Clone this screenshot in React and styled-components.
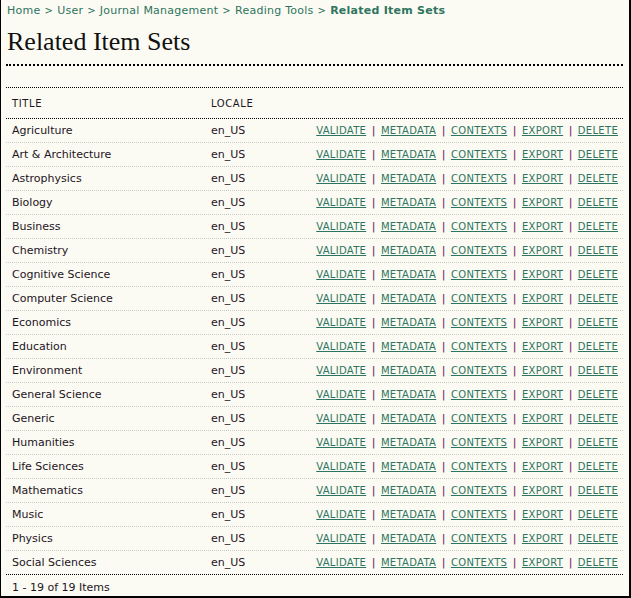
import React from "react";
import styled, { createGlobalStyle } from "styled-components";

const Global = createGlobalStyle`
  html, body { margin: 0; padding: 0; background: #fbfbf3; }
  body { font-family: "DejaVu Sans", Verdana, sans-serif; }
`;

const Frame = styled.div`
  box-sizing: border-box;
  width: 631px;
  height: 598px;
  background: #fbfbf3;
  border-left: 1px solid #000;
  border-right: 2px solid #000;
  border-bottom: 2px solid #000;
  padding: 0 6px 0 5px;
  color: #1e1424;
  font-size: 11px;
  overflow: hidden;
`;

const Breadcrumb = styled.div`
  padding: 3px 0 0 1px;
  height: 15px;
  line-height: 15px;
  font-size: 11px;
  letter-spacing: 0.25px;
  color: #2e6f5a;
`;

const Crumb = styled.a`
  color: #2e7460;
  text-decoration: none;
  font-weight: ${(p) => (p.$current ? "bold" : "normal")};
`;

const Sep = styled.span`
  color: #2e6f5a;
  margin: 0 4px;
  font-size: 10px;
`;

const Heading = styled.h2`
  margin: 0;
  padding: 9px 0 0 1px;
  height: 37px;
  font-family: "Liberation Serif", "Times New Roman", serif;
  font-weight: normal;
  font-size: 26px;
  line-height: 30px;
  color: #111;
  border-bottom: 2px dotted #000;
`;

const Table = styled.div`
  margin-top: 21px;
  border-top: 1px dotted #000;
`;

const HeadRow = styled.div`
  display: grid;
  grid-template-columns: 199px 100px 1fr;
  height: 30px;
  align-items: center;
  border-bottom: 1px dotted #000;
  font-size: 10px;
  letter-spacing: 0.6px;
  text-transform: uppercase;
  padding-left: 6px;
`;

const Row = styled.div`
  display: grid;
  grid-template-columns: 199px 100px 1fr;
  height: 23px;
  align-items: center;
  padding-left: 6px;
  border-bottom: 1px dotted ${(p) => (p.$last ? "#000" : "#c9c9bd")};
`;

const Actions = styled.div`
  text-align: right;
  padding-right: 5px;
  white-space: nowrap;
`;

const ActionLink = styled.a`
  color: #2e7460;
  font-size: 10px;
  letter-spacing: 0.3px;
  text-decoration: underline;
  cursor: pointer;
`;

const Bar = styled.span`
  color: #6a0f62;
  margin: 0 5.5px;
`;

const Footer = styled.div`
  padding: 6px 0 0 6px;
  font-size: 11px;
`;

const sets = [
  "Agriculture",
  "Art & Architecture",
  "Astrophysics",
  "Biology",
  "Business",
  "Chemistry",
  "Cognitive Science",
  "Computer Science",
  "Economics",
  "Education",
  "Environment",
  "General Science",
  "Generic",
  "Humanities",
  "Life Sciences",
  "Mathematics",
  "Music",
  "Physics",
  "Social Sciences",
];

const actions = ["Validate", "Metadata", "Contexts", "Export", "Delete"];

export default function App() {
  const crumbs = ["Home", "User", "Journal Management", "Reading Tools"];
  return (
    <>
      <Global />
      <Frame>
        <Breadcrumb>
          {crumbs.map((c) => (
            <React.Fragment key={c}>
              <Crumb href="#">{c}</Crumb>
              <Sep>&gt;</Sep>
            </React.Fragment>
          ))}
          <Crumb href="#" $current>
            Related Item Sets
          </Crumb>
        </Breadcrumb>
        <Heading>Related Item Sets</Heading>
        <Table>
          <HeadRow>
            <span>Title</span>
            <span>Locale</span>
            <span />
          </HeadRow>
          {sets.map((s, i) => (
            <Row key={s} $last={i === sets.length - 1}>
              <span>{s}</span>
              <span>en_US</span>
              <Actions>
                {actions.map((a, j) => (
                  <React.Fragment key={a}>
                    {j > 0 && <Bar>|</Bar>}
                    <ActionLink>{a.toUpperCase()}</ActionLink>
                  </React.Fragment>
                ))}
              </Actions>
            </Row>
          ))}
        </Table>
        <Footer>1 - 19 of 19 Items</Footer>
      </Frame>
    </>
  );
}
